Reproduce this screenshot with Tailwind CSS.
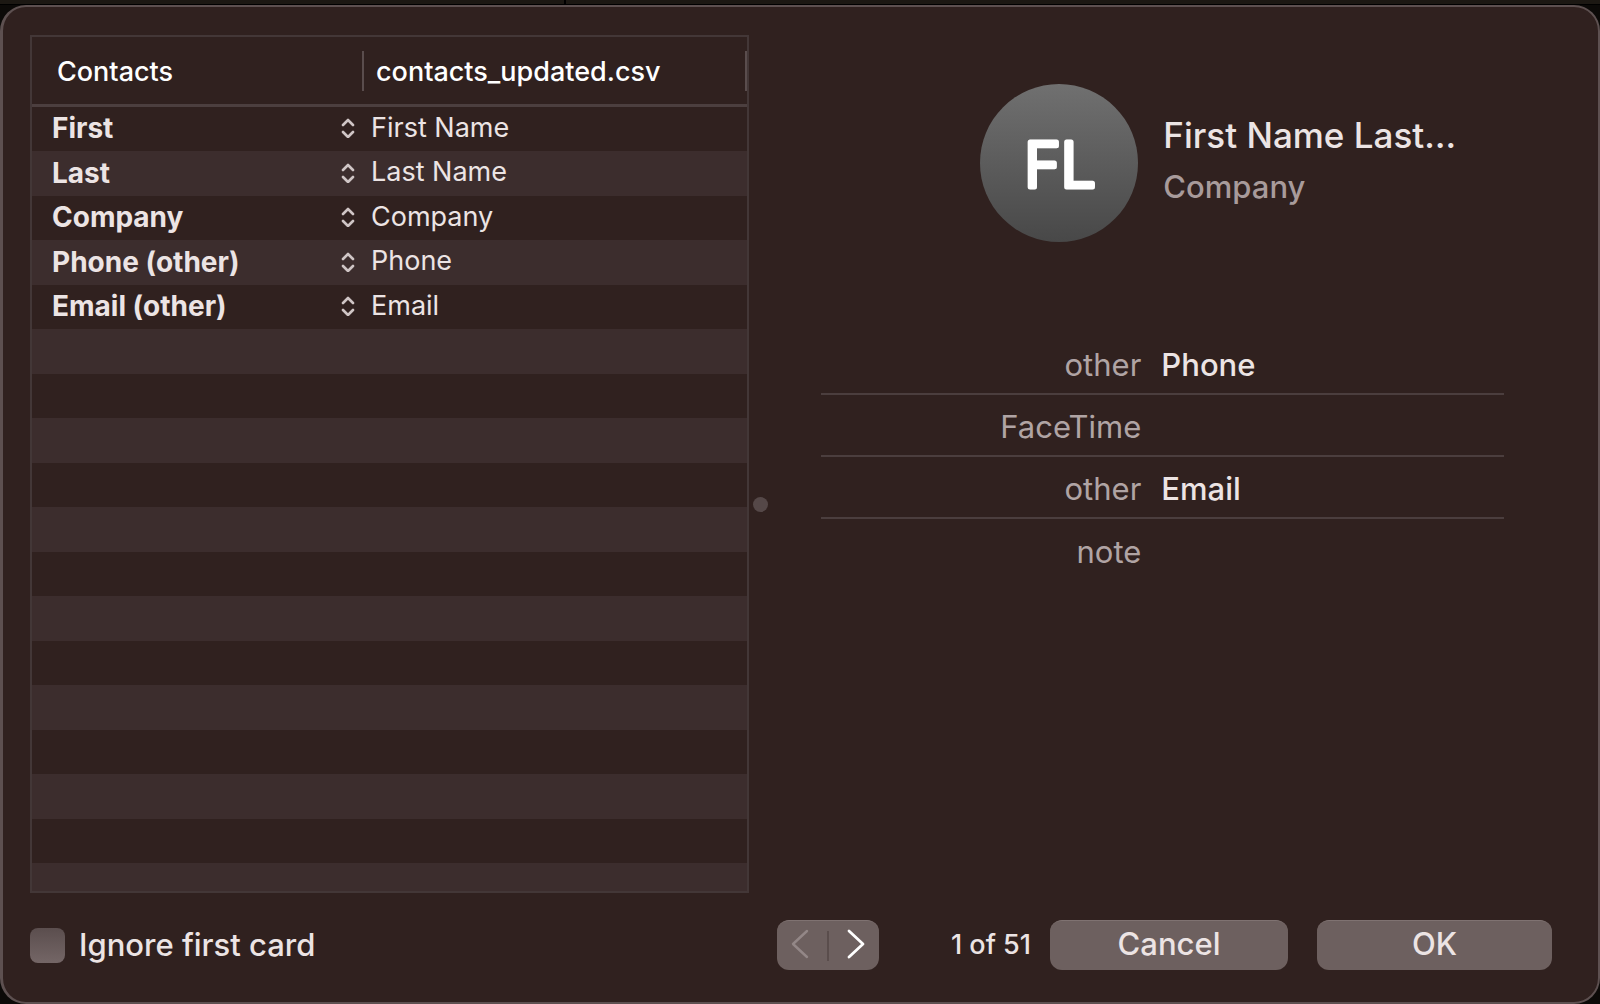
<!DOCTYPE html>
<html lang="en">
  <head>
    <meta charset="UTF-8" />
    <meta name="viewport" content="width=device-width, initial-scale=1.0" />
    <title>Import Contacts</title>
    <script src="https://cdn.jsdelivr.net/npm/@tailwindcss/browser@4"></script>
  </head>

  <body
    class="flex h-screen flex-col bg-[#0c0a08] font-['Inter','Liberation_Sans',sans-serif] text-[#ece4e4]"
  >
    <!-- strip of the window behind -->
    <div class="flex h-[5px] shrink-0 border-b border-black bg-[#1c1813]">
      <div class="w-[566px] border-r-2 border-black"></div>
    </div>

    <main
      class="flex min-h-0 flex-1 flex-col rounded-[26px] border-2 border-l-3 border-[#5d5050] bg-[#30211f] pt-7 pb-8"
    >
      <div class="flex min-h-0 flex-1">
        <!-- field mapping -->
        <section
          class="ml-[27px] w-[45.1%] overflow-hidden border-2 border-[#433737]"
        >
          <table class="w-full table-fixed border-separate border-spacing-0">
            <thead>
              <tr class="h-[70px] text-left text-[27px] text-white">
                <th
                  class="w-[332px] border-b-3 border-[#4c3f3f] p-0 font-medium"
                >
                  <div
                    class="flex h-10 items-center border-r-2 border-[#5a4d4d] pt-1 pl-[25px]"
                  >
                    Contacts
                  </div>
                </th>
                <th class="border-b-3 border-[#4c3f3f] p-0 font-medium">
                  <div
                    class="flex h-10 items-center border-r-2 border-[#5a4d4d] pt-1 pl-3"
                  >
                    contacts_updated.csv
                  </div>
                </th>
              </tr>
            </thead>
            <tbody id="rows" class="text-[27px]"></tbody>
          </table>
        </section>

        <!-- splitter -->
        <div class="flex w-[22px] items-center justify-center pt-20">
          <div class="size-[15px] rounded-full bg-[#554848]"></div>
        </div>

        <!-- card preview -->
        <section class="mr-[94px] ml-[50px] min-w-0 flex-1 pt-[49px]">
          <div class="flex items-center gap-[25px] pl-[159px]">
            <svg class="size-[158px] shrink-0" viewBox="0 0 158 158">
              <defs>
                <linearGradient id="avatar" x1="0" y1="0" x2="0" y2="1">
                  <stop offset="0" stop-color="#707070" />
                  <stop offset="1" stop-color="#484848" />
                </linearGradient>
              </defs>
              <circle cx="79" cy="79" r="79" fill="url(#avatar)" />
              <text
                class="fill-white stroke-white font-light"
                x="80"
                y="103"
                font-size="62"
                stroke-width="5"
                stroke-linejoin="round"
                text-anchor="middle"
              >
                FL
              </text>
            </svg>
            <div
              class="min-w-0 pb-1 leading-[52px] font-medium whitespace-nowrap"
            >
              <h1 class="text-[35px]">First Name Last…</h1>
              <p class="text-[31px] text-[#a89b9b]">Company</p>
            </div>
          </div>

          <dl class="mt-[91px] text-[31px]">
            <div class="flex h-[62px] items-center gap-5 border-b-2 border-[#4b3e3e] pt-1">
              <dt class="w-80 text-right text-[#b0a4a4]">other</dt>
              <dd class="font-medium">Phone</dd>
            </div>
            <div class="flex h-[62px] items-center gap-5 border-b-2 border-[#4b3e3e] pt-1">
              <dt class="w-80 text-right text-[#b0a4a4]">FaceTime</dt>
              <dd></dd>
            </div>
            <div class="flex h-[62px] items-center gap-5 border-b-2 border-[#4b3e3e] pt-1">
              <dt class="w-80 text-right text-[#b0a4a4]">other</dt>
              <dd class="font-medium">Email</dd>
            </div>
            <div class="flex h-[62px] items-center gap-5 pt-1">
              <dt class="w-80 text-right text-[#b0a4a4]">note</dt>
              <dd></dd>
            </div>
          </dl>
        </section>
      </div>

      <footer
        class="mt-[27px] flex h-[50px] items-center pr-[46px] pl-[27px] font-medium"
      >
        <label for="ignoreFirst" class="flex items-center gap-[14px] text-[31px]">
          <input
            type="checkbox"
            id="ignoreFirst"
            class="size-[35px] appearance-none rounded-lg bg-linear-to-b from-[#5b4e4e] to-[#746666] checked:from-blue-500 checked:to-blue-600"
          />
          Ignore first card
        </label>

        <div
          class="ml-auto flex h-full w-[102px] items-center rounded-xl border-t border-[#7f7271] bg-[#6d605f]"
        >
          <button
            class="flex h-full flex-1 items-center justify-center pr-1 pb-1"
            aria-label="Previous card"
            disabled
          >
            <svg class="h-[30px] w-[18px]" viewBox="0 0 18 30" fill="none" stroke="#938787" stroke-width="2.4" stroke-linecap="round" stroke-linejoin="round">
              <path d="M16 2 2 15l14 13" />
            </svg>
          </button>
          <div class="h-[30px] w-[2px] bg-[#5a4d4c]"></div>
          <button
            class="flex h-full flex-1 items-center justify-center pl-1 pb-1"
            aria-label="Next card"
          >
            <svg class="h-[30px] w-[18px]" viewBox="0 0 18 30" fill="none" stroke="#fff" stroke-width="2.8" stroke-linecap="round" stroke-linejoin="round">
              <path d="M2 2l14 13L2 28" />
            </svg>
          </button>
        </div>

        <p class="w-[171px] pr-[19px] text-right text-[27px]">1 of 51</p>

        <button
          class="h-full w-[238px] rounded-xl border-t border-[#7f7271] bg-[#6d605f] pb-1 text-[31px]"
        >
          Cancel
        </button>
        <button
          class="ml-[29px] h-full w-[235px] rounded-xl border-t border-[#7f7271] bg-[#6d605f] pb-1 text-[31px]"
        >
          OK
        </button>
      </footer>
    </main>

    <script>
      const fields = [
        ["First", "First Name"],
        ["Last", "Last Name"],
        ["Company", "Company"],
        ["Phone (other)", "Phone"],
        ["Email (other)", "Email"],
      ];
      const ROW_COUNT = 18;

      const rows = document.getElementById("rows");
      for (let i = 0; i < ROW_COUNT; i++) {
        const tr = document.createElement("tr");
        tr.className = i % 2 ? "h-[45px] bg-[#3c2d2d]" : "h-[44px]";
        if (fields[i]) {
          const [name, column] = fields[i];
          tr.innerHTML = `
            <td class="p-0">
              <div class="flex h-10 items-center pb-[2px] pl-5 pr-2">
                <select aria-label="Field for ${column}" class="min-w-0 flex-1 appearance-none text-[28px] font-bold outline-none">
                  <option>${name}</option>
                </select>
                <svg class="pointer-events-none h-5 w-4 shrink-0" viewBox="0 0 16 20" fill="none" stroke="#cfc5c5" stroke-width="2.6" stroke-linecap="round" stroke-linejoin="round">
                  <path d="M3 7l5-5 5 5M3 14l5 5 5-5" />
                </svg>
              </div>
            </td>
            <td class="p-0 pl-[7px]"><div class="flex h-10 items-center pb-[2px]">${column}</div></td>`;
        } else {
          tr.innerHTML = '<td class="p-0"></td><td class="p-0"></td>';
        }
        rows.appendChild(tr);
      }
    </script>
  </body>
</html>
